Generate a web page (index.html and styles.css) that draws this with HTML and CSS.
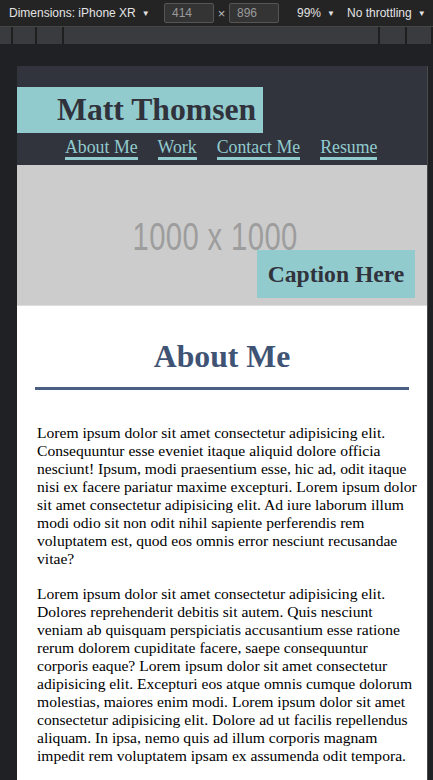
FILE: index.html
```html
<!DOCTYPE html>
<html lang="en">
<head>
<meta charset="utf-8">
<title>Matt Thomsen</title>
<link rel="stylesheet" href="styles.css">
</head>
<body>
<div class="devtools">
  <div class="toolbar">
    <span class="tb-item tb-dims">Dimensions: iPhone XR<span class="caret">▼</span></span>
    <span class="tb-input">414</span>
    <span class="tb-times">×</span>
    <span class="tb-input">896</span>
    <span class="tb-item tb-zoom">99%<span class="caret">▼</span></span>
    <span class="tb-item tb-throttle">No throttling<span class="caret">▼</span></span>
  </div>
  <div class="ruler">
    <span class="seg s1"></span>
    <span class="seg s2"></span>
    <span class="seg s3"></span>
    <span class="seg s4"></span>
    <span class="seg s5"></span>
    <span class="seg s6"></span>
  </div>
</div>
<div class="stage">
  <div class="frame">
    <header class="site-header">
      <h1 class="name"><span class="name-box">Matt Thomsen</span></h1>
      <nav class="nav">
        <a href="#" class="nav-link">About Me</a>
        <a href="#" class="nav-link">Work</a>
        <a href="#" class="nav-link">Contact Me</a>
        <a href="#" class="nav-link">Resume</a>
      </nav>
    </header>
    <section class="hero">
      <span class="placeholder">1000 x 1000</span>
      <div class="caption">Caption Here</div>
    </section>
    <main class="content">
      <h2 class="section-title">About Me</h2>
      <hr class="rule">
      <p>Lorem ipsum dolor sit amet consectetur adipisicing elit.<br>
Consequuntur esse eveniet itaque aliquid dolore officia<br>
nesciunt! Ipsum, modi praesentium esse, hic ad, odit itaque<br>
nisi ex facere pariatur maxime excepturi. Lorem ipsum dolor<br>
sit amet consectetur adipisicing elit. Ad iure laborum illum<br>
modi odio sit non odit nihil sapiente perferendis rem<br>
voluptatem est, quod eos omnis error nesciunt recusandae<br>
vitae?</p>
      <p>Lorem ipsum dolor sit amet consectetur adipisicing elit.<br>
Dolores reprehenderit debitis sit autem. Quis nesciunt<br>
veniam ab quisquam perspiciatis accusantium esse ratione<br>
rerum dolorem cupiditate facere, saepe consequuntur<br>
corporis eaque? Lorem ipsum dolor sit amet consectetur<br>
adipisicing elit. Excepturi eos atque omnis cumque dolorum<br>
molestias, maiores enim modi. Lorem ipsum dolor sit amet<br>
consectetur adipisicing elit. Dolore ad ut facilis repellendus<br>
aliquam. In ipsa, nemo quis ad illum corporis magnam<br>
impedit rem voluptatem ipsam ex assumenda odit tempora.</p>
    </main>
  </div>
</div>
</body>
</html>
```

FILE: styles.css
```css
* { box-sizing: border-box; }

html, body {
  margin: 0;
  padding: 0;
  background: #202124;
  overflow: hidden;
  height: 780px;
}

/* ---------- devtools chrome ---------- */
.devtools {
  font-family: "Liberation Sans", Arial, sans-serif;
  color: #e3e3e3;
}

.toolbar {
  height: 27px;
  background: #242424;
  border-bottom: 1px solid #454545;
  display: flex;
  align-items: center;
  font-size: 12px;
  padding-left: 9px;
  white-space: nowrap;
  overflow: hidden;
}

.toolbar > span { flex-shrink: 0; }

.caret {
  font-size: 8px;
  margin-left: 6px;
  position: relative;
  top: -1px;
}

.tb-dims { width: 155px; }

.tb-input {
  width: 50px;
  height: 20px;
  background: #343434;
  border: 1px solid #555;
  border-radius: 2px;
  color: #9a9a9a;
  padding-left: 7px;
  line-height: 18px;
  font-size: 12px;
}

.tb-times {
  color: #bdbdbd;
  width: 15px;
  text-align: center;
  font-size: 13px;
}

.tb-zoom {
  margin-left: 18px;
  width: 50px;
}

.tb-throttle { width: 86px; }

.ruler {
  height: 17px;
  background: #3a3b3e;
  position: relative;
}

.seg {
  position: absolute;
  top: 0;
  width: 2px;
  height: 17px;
  background: #1f1f1f;
}
.s1 { left: 11px; }
.s2 { left: 35px; }
.s3 { left: 62px; }
.s4 { left: 378px; }
.s5 { left: 405px; }
.s6 { left: 431px; }

.stage {
  padding: 22px 5px 0 17px;
  background: #202124;
}

.frame {
  width: 411px;
  border-right: 1px solid #4a4a4a;
  background: #ffffff;
  height: 720px;
  overflow: hidden;
}

/* ---------- site ---------- */
.site-header {
  background: #31333d;
  height: 99px;
  padding-top: 21px;
  font-family: "Liberation Serif", "Times New Roman", serif;
}

.name {
  margin: 0;
  font-size: 31.7px;
  font-weight: bold;
  line-height: 46px;
}

.name-box {
  display: inline-block;
  height: 46px;
  background: #92cbce;
  color: #30323c;
  padding: 0 7px 0 40px;
}

.nav {
  display: flex;
  gap: 20px;
  padding-left: 48px;
  margin-top: 4px;
}

.nav-link {
  color: #92cbce;
  text-decoration: none;
  font-size: 17.8px;
  line-height: 20px;
  border-bottom: 3px solid #92cbce;
}

.hero {
  height: 141px;
  background: #cccccc;
  border-bottom: 1px solid #dedede;
  position: relative;
  display: flex;
  align-items: center;
  justify-content: center;
}

.placeholder {
  font-family: "Liberation Sans", Arial, sans-serif;
  font-size: 39px;
  color: #9d9d9d;
  transform: scaleX(0.75);
  margin-right: 13px;
  margin-top: 4px;
  letter-spacing: 0.5px;
}

.caption {
  position: absolute;
  right: 12px;
  bottom: 7px;
  width: 158px;
  height: 48px;
  background: #92cbce;
  color: #30323c;
  font-family: "Liberation Serif", "Times New Roman", serif;
  font-weight: bold;
  font-size: 23.6px;
  line-height: 48px;
  text-align: center;
}

.content {
  padding: 33px 18px 0 18px;
  font-family: "Liberation Serif", "Times New Roman", serif;
  color: #000;
}

.section-title {
  margin: 0;
  text-align: center;
  font-size: 31.7px;
  line-height: 35px;
  color: #3f5475;
  font-weight: bold;
}

.rule {
  margin: 13px 0 0 0;
  border: none;
  height: 3px;
  background: #4a5f82;
}

.content p {
  margin: 34px -14px 0 0;
  padding: 0 0 0 2px;
  font-size: 15.6px;
  line-height: 18px;
  white-space: nowrap;
}

.content p + p {
  margin-top: 17px;
}
```
